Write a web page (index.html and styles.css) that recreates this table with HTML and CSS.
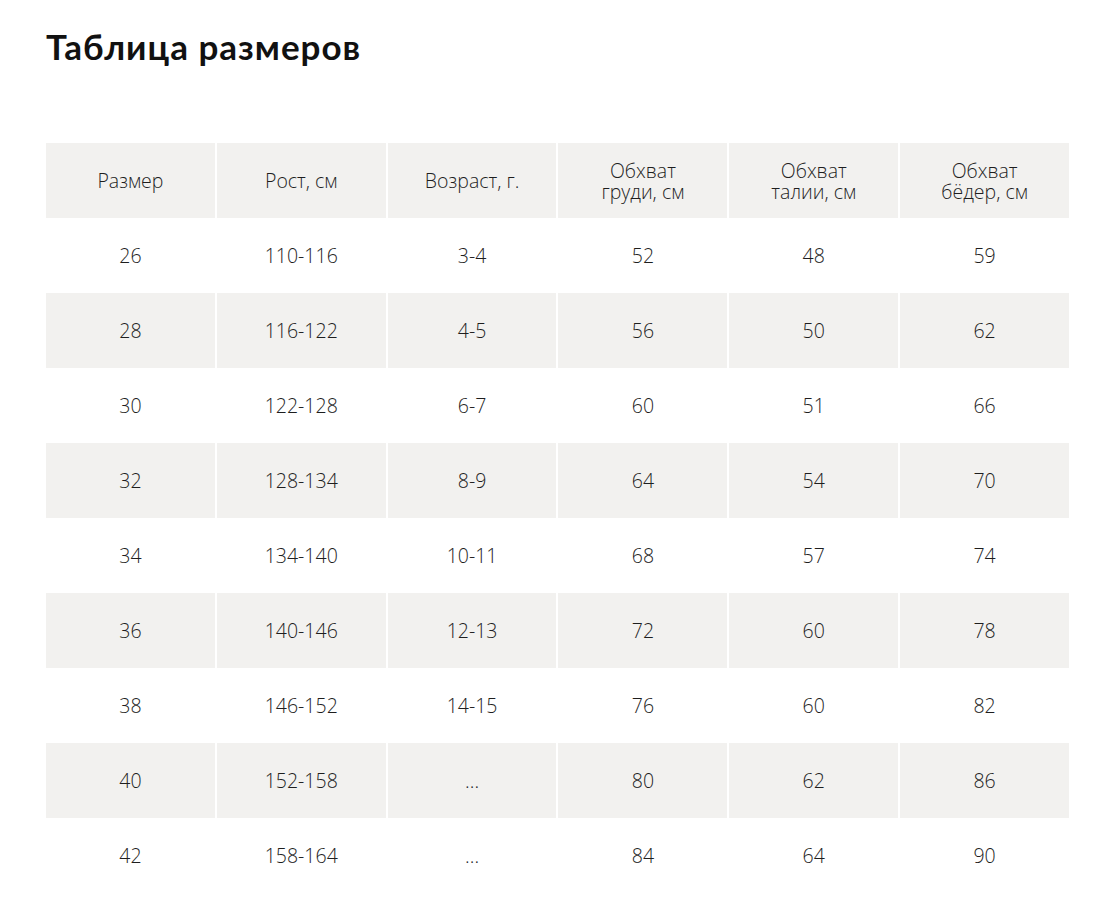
FILE: index.html
```html
<!DOCTYPE html>
<html lang="ru">
<head>
<meta charset="utf-8">
<title>Таблица размеров</title>
<link rel="stylesheet" href="styles.css">
</head>
<body>
<main class="page">
  <h1 class="title">Таблица размеров</h1>
  <div class="table">
    <div class="row shaded head">
      <div class="cell">Размер</div>
      <div class="cell">Рост, см</div>
      <div class="cell">Возраст, г.</div>
      <div class="cell">Обхват<br>груди, см</div>
      <div class="cell">Обхват<br>талии, см</div>
      <div class="cell">Обхват<br>бёдер, см</div>
    </div>
    <div class="row"><div class="cell">26</div><div class="cell">110-116</div><div class="cell">3-4</div><div class="cell">52</div><div class="cell">48</div><div class="cell">59</div></div>
    <div class="row shaded"><div class="cell">28</div><div class="cell">116-122</div><div class="cell">4-5</div><div class="cell">56</div><div class="cell">50</div><div class="cell">62</div></div>
    <div class="row"><div class="cell">30</div><div class="cell">122-128</div><div class="cell">6-7</div><div class="cell">60</div><div class="cell">51</div><div class="cell">66</div></div>
    <div class="row shaded"><div class="cell">32</div><div class="cell">128-134</div><div class="cell">8-9</div><div class="cell">64</div><div class="cell">54</div><div class="cell">70</div></div>
    <div class="row"><div class="cell">34</div><div class="cell">134-140</div><div class="cell">10-11</div><div class="cell">68</div><div class="cell">57</div><div class="cell">74</div></div>
    <div class="row shaded"><div class="cell">36</div><div class="cell">140-146</div><div class="cell">12-13</div><div class="cell">72</div><div class="cell">60</div><div class="cell">78</div></div>
    <div class="row"><div class="cell">38</div><div class="cell">146-152</div><div class="cell">14-15</div><div class="cell">76</div><div class="cell">60</div><div class="cell">82</div></div>
    <div class="row shaded"><div class="cell">40</div><div class="cell">152-158</div><div class="cell">...</div><div class="cell">80</div><div class="cell">62</div><div class="cell">86</div></div>
    <div class="row"><div class="cell">42</div><div class="cell">158-164</div><div class="cell">...</div><div class="cell">84</div><div class="cell">64</div><div class="cell">90</div></div>
  </div>
</main>
</body>
</html>
```
FILE: styles.css
```css
html, body {
  margin: 0;
  padding: 0;
  background: #ffffff;
}
body {
  font-family: "Open Sans", "Noto Sans", "DejaVu Sans", sans-serif;
  color: #1e1e1e;
}
.page {
  padding: 24px 45px 0 46px;
}
.title {
  margin: 0;
  font-family: "Lato", "Noto Sans", sans-serif;
  font-size: 35px;
  line-height: 44px;
  font-weight: 700;
  color: #111111;
  letter-spacing: 1px;
}
.table {
  margin-top: 75px;
  width: 1023px;
}
.row {
  display: grid;
  grid-template-columns: repeat(6, 1fr);
  column-gap: 2px;
  height: 75px;
}
.cell {
  display: flex;
  align-items: center;
  justify-content: center;
  text-align: center;
  font-size: 19.5px;
  font-weight: 350;
  line-height: 21px;
  color: #1e1e1e;
}
.shaded .cell {
  background: #f2f1ef;
}
```
